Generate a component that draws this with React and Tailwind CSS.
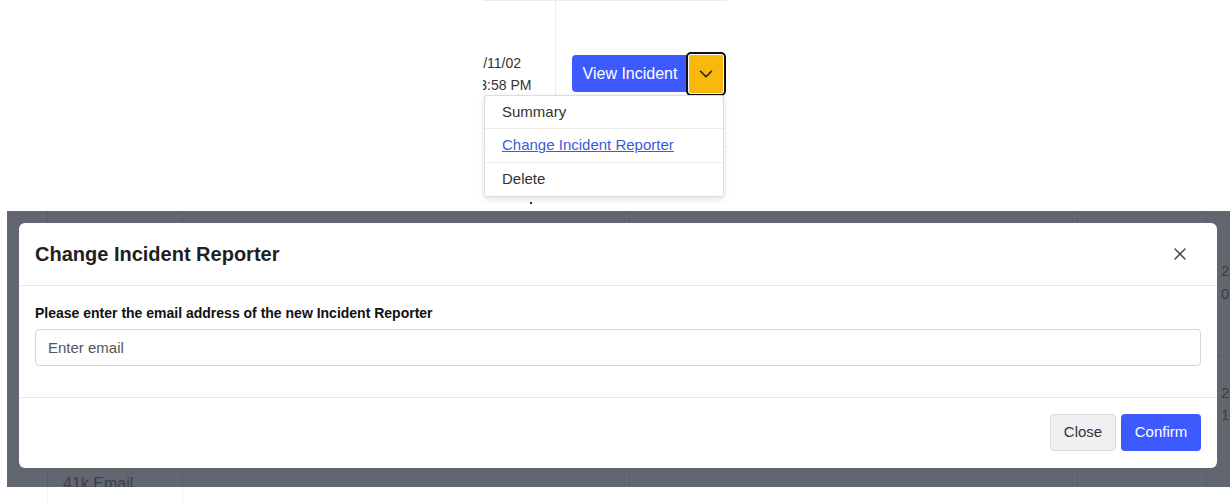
import { X, ChevronDown } from 'lucide-react';

const font = { fontFamily: '"Liberation Sans", Arial, sans-serif' };

function ActionCell() {
  return (
    <div className="relative flex h-[147px] ml-[483px] w-[244px] border-t border-b border-[#ececec]">
      <div className="w-[73px] shrink-0 flex items-center overflow-hidden border-r border-[#ececec]">
        <div className="-ml-[31px] text-[14px] leading-[22px] text-[#333] whitespace-nowrap">
          <div>2024/11/02</div>
          <div>12:03:58 PM</div>
        </div>
      </div>
      <div className="flex-1 flex items-center pl-[16px]">
        <div className="flex items-center">
          <button className="h-[37px] w-[116px] bg-[#3d5afe] text-white text-[16px] rounded-l-[4px]">
            View Incident
          </button>
          <div className="-ml-[2px] h-[44px] w-[40px] border-2 border-[#111] rounded-[5px] p-[1px]">
            <button className="h-full w-full bg-[#f8b80e] rounded-[2px] flex items-center justify-center text-[#222]">
              <ChevronDown size={22} strokeWidth={1.75} />
            </button>
          </div>
        </div>
      </div>
      <div className="absolute left-[1px] top-[94px] w-[240px] bg-white border border-[#dcdcdc] rounded-[3px] shadow-[0_2px_6px_rgba(0,0,0,0.12)] text-[15px]">
        <div className="h-[33px] flex items-center px-[17px] text-[#333] border-b border-[#ececec]">Summary</div>
        <div className="h-[34px] flex items-center px-[17px] text-[#3b5bdb] underline border-b border-[#ececec]">
          Change Incident Reporter
        </div>
        <div className="h-[33px] flex items-center px-[17px] text-[#333]">Delete</div>
      </div>
    </div>
  );
}

function Backdrop() {
  return (
    <div className="absolute inset-0 flex text-[#3b3e45]">
      <div className="w-[41px] shrink-0 border-r border-[#5a5e67]" />
      <div className="w-[135px] shrink-0 border-r border-[#5a5e67] pt-[263px] pl-[15px] text-[16px] leading-[20px] whitespace-nowrap">
        41k Email
      </div>
      <div className="w-[447px] shrink-0 border-r border-[#5a5e67]" />
      <div className="w-[448px] shrink-0 border-r border-[#5a5e67]" />
      <div className="w-[129px] shrink-0 border-r border-[#5a5e67]" />
      <div className="flex-1 min-w-0 flex flex-col">
        <div className="h-[145px] border-b border-[#5a5e67] pt-[48px] pl-[14px] text-[15px] leading-[23px] whitespace-nowrap">
          <div>2024</div>
          <div>01:12</div>
        </div>
        <div className="pt-[26px] pl-[14px] text-[15px] leading-[22px] whitespace-nowrap">
          <div>2024</div>
          <div>10:42</div>
        </div>
      </div>
    </div>
  );
}

function Modal() {
  return (
    <div className="absolute left-[12px] top-[12px] w-[1198px] h-[245px] bg-white rounded-[6px] flex flex-col">
      <div className="h-[63px] flex items-center justify-between pl-[16px] pr-[27px] border-b border-[#e9e9ec]">
        <h3 className="text-[20px] font-bold text-[#1f1f1f]">Change Incident Reporter</h3>
        <X size={20} strokeWidth={1.75} className="text-[#444]" />
      </div>
      <div className="h-[112px] px-[16px] pt-[19px] border-b border-[#e9e9ec]">
        <label className="block text-[14px] font-bold text-[#111] leading-[17px]">
          Please enter the email address of the new Incident Reporter
        </label>
        <input
          placeholder="Enter email"
          className="mt-[7px] w-full h-[37px] border border-[#d6d6da] rounded-[4px] px-[12px] text-[15px] placeholder:text-[#555] outline-none"
          style={font}
        />
      </div>
      <div className="flex-1 flex items-center justify-end gap-[5px] pr-[16px] pb-[1px]">
        <button className="h-[37px] w-[66px] bg-[#f0f0f3] border border-[#d9d9de] rounded-[4px] text-[15px] text-[#333]">
          Close
        </button>
        <button className="h-[37px] w-[80px] bg-[#3d5afe] rounded-[4px] text-[15px] text-white">
          Confirm
        </button>
      </div>
    </div>
  );
}

export default function App() {
  return (
    <div className="w-[1230px] h-[504px] bg-white overflow-hidden" style={font}>
      <div className="relative h-[211px]">
        <ActionCell />
        <div className="ml-[530px] mt-[55px] w-[2px] h-[2px] bg-[#333]" />
      </div>
      <div className="flex h-[276px]">
        <div className="w-[7px] shrink-0" />
        <div className="relative flex-1 bg-[#62666f] overflow-hidden">
          <Backdrop />
          <Modal />
        </div>
      </div>
      <div className="flex h-[17px]">
        <div className="w-[48px] border-r border-[#f4f4f4]" />
        <div className="w-[135px] border-r border-[#f4f4f4]" />
      </div>
    </div>
  );
}
